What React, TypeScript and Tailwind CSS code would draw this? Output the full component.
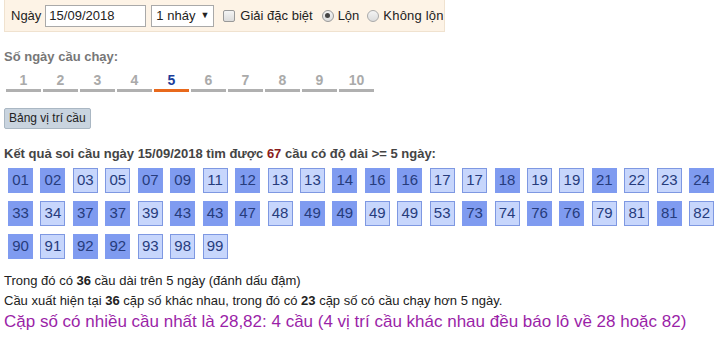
import React from 'react';

const rows: [string, boolean][] = [
  ['01', true], ['02', true], ['03', false], ['05', false], ['07', true], ['09', true],
  ['11', false], ['12', true], ['13', false], ['13', false], ['14', true], ['16', true],
  ['16', true], ['17', false], ['17', false], ['18', true], ['19', false], ['19', false],
  ['21', true], ['22', false], ['23', false], ['24', true],
  ['33', true], ['34', false], ['37', true], ['37', true], ['39', false], ['43', true],
  ['43', true], ['47', true], ['48', false], ['49', true], ['49', true], ['49', false],
  ['49', false], ['53', false], ['73', true], ['74', false], ['76', true], ['76', true],
  ['79', false], ['81', false], ['81', true], ['82', false],
  ['90', true], ['91', false], ['92', true], ['92', true], ['93', false], ['98', false],
  ['99', false],
];

const days = ['1', '2', '3', '4', '5', '6', '7', '8', '9', '10'];

export default function App() {
  return (
    <div
      className="min-h-[341px] w-[720px] bg-white pl-[4px] text-[13px] text-[#222]"
      style={{ fontFamily: '"Liberation Sans", Arial, sans-serif' }}
    >
      <div className="flex h-[32px] w-[441px] items-center border border-t-0 border-[#f0e2cf] bg-[#fdf3e6] pl-[6px] text-[13px] text-[#222]">
        <span>Ngày</span>
        <div className="ml-[4px] flex h-[22px] w-[101px] items-center border border-[#a9a9a9] bg-white px-[3px] text-[13px]">
          15/09/2018
        </div>
        <div className="ml-[5px] flex h-[22px] w-[63px] items-center justify-between border border-[#a9a9a9] bg-white px-[4px] text-[13px]">
          <span>1 nháy</span>
          <span className="text-[9px]">▼</span>
        </div>
        <span className="ml-[9px] h-[12px] w-[12px] rounded-[2px] border border-[#999] bg-gradient-to-b from-[#f4f4f4] to-[#dcdcdc]" />
        <span className="ml-[5px]">Giải đặc biệt</span>
        <span className="ml-[9px] flex h-[12px] w-[12px] items-center justify-center rounded-full border border-[#999] bg-gradient-to-b from-[#f4f4f4] to-[#dcdcdc]">
          <span className="h-[5px] w-[5px] rounded-full bg-[#444]" />
        </span>
        <span className="ml-[4px]">Lộn</span>
        <span className="ml-[8px] h-[12px] w-[12px] rounded-full border border-[#aaa] bg-gradient-to-b from-[#f4f4f4] to-[#dcdcdc]" />
        <span className="ml-[4px] tracking-[0.2px]">Không lộn</span>
      </div>

      <div className="mt-[15px] text-[13px] font-bold text-[#777]">Số ngày cầu chạy:</div>
      <div className="mt-[5px] flex gap-[2px] pl-[2px]">
        {days.map((d) => (
          <div
            key={d}
            className={`flex h-[20px] w-[35px] items-center justify-center border-b-[3px] text-[14px] font-bold ${
              d === '5' ? 'border-[#e8691c] text-[#1b3d9a]' : 'border-[#b0b0b0] text-[#aaa]'
            }`}
          >
            {d}
          </div>
        ))}
      </div>

      <button className="mt-[16px] flex h-[21px] items-center rounded-[2px] border border-[#aab7c3] bg-[#c9d4df] px-[4px] text-[12px] text-[#222]">
        Bảng vị trí cầu
      </button>

      <div className="mt-[15px] text-[13px] font-bold text-[#444]">
        Kết quả soi cầu ngày 15/09/2018 tìm được <span className="text-[#8b1c1c]">67</span> cầu có độ dài &gt;= 5 ngày:
      </div>

      <div className="mt-[5px] flex w-[712px] flex-wrap gap-x-[7.45px] gap-y-[8px] pl-[4px]">
        {rows.map(([n, dark], i) => (
          <div
            key={i}
            className={`flex h-[25px] w-[25px] items-center justify-center border text-[15px] text-[#263c7c] ${
              dark ? 'border-[#7f9bf0] bg-[#7f9bf0]' : 'border-[#7e98e2] bg-[#c7d6fc]'
            }`}
          >
            {n}
          </div>
        ))}
      </div>

      <div className="mt-[12px] leading-[20px]">
        Trong đó có <b>36</b> cầu dài trên 5 ngày (đánh dấu đậm)
      </div>
      <div className="leading-[20px]">
        Cầu xuất hiện tại <b>36</b> cặp số khác nhau, trong đó có <b>23</b> cặp số có cầu chạy hơn 5 ngày.
      </div>
      <div className="text-[17px] leading-[22px] text-[#9b1fa8]">
        Cặp số có nhiều cầu nhất là 28,82: 4 cầu (4 vị trí cầu khác nhau đều báo lô về 28 hoặc 82)
      </div>
    </div>
  );
}
